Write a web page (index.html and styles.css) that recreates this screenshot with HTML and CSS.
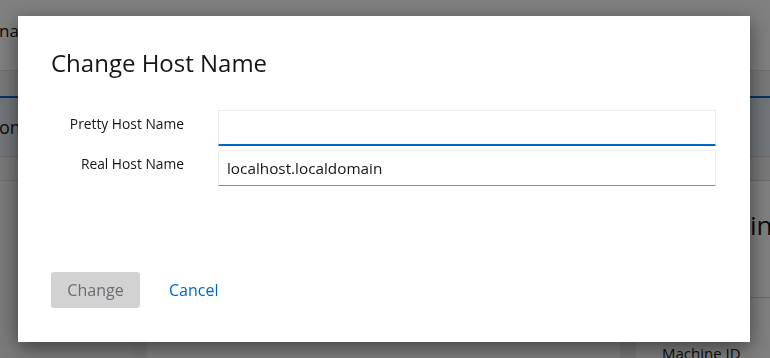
FILE: index.html
```html
<!DOCTYPE html>
<html lang="en">
<head>
<meta charset="utf-8">
<title>Change Host Name</title>
<link rel="stylesheet" href="styles.css">
</head>
<body>
<div class="page">
  <header class="topbar"><span class="top-text">naL</span></header>
  <nav class="tabs"></nav>
  <div class="nav-sel"><span class="sel-text">on</span></div>
  <div class="toolbar"></div>
  <div class="content">
    <div class="col col-left"></div>
    <div class="col col-mid"></div>
    <div class="col col-right">
      <div class="card-title">int</div>
      <div class="card-row"></div>
      <div class="card-row label-row">Machine ID</div>
    </div>
  </div>
</div>
<div class="backdrop">
  <div class="modal" role="dialog" aria-labelledby="modal-title">
    <h1 class="modal-title" id="modal-title">Change Host Name</h1>
    <form class="modal-body">
      <label class="field-label" for="pretty">Pretty Host Name</label>
      <input class="field-input focused" id="pretty" type="text" value="">
      <label class="field-label" for="real">Real Host Name</label>
      <input class="field-input" id="real" type="text" value="localhost.localdomain">
    </form>
    <div class="modal-footer">
      <button class="btn btn-primary" type="button" disabled>Change</button>
      <button class="btn btn-link" type="button">Cancel</button>
    </div>
  </div>
</div>
</body>
</html>
```

FILE: styles.css
```css
* { box-sizing: border-box; }
html, body {
  margin: 0;
  padding: 0;
  width: 770px;
  height: 358px;
  overflow: hidden;
  font-family: "Open Sans", "Noto Sans", sans-serif;
  color: #151515;
}
.page {
  width: 770px;
  height: 358px;
  background: #f0f0f0;
  display: flex;
  flex-direction: column;
  overflow: hidden;
}
.topbar {
  flex-shrink: 0;
  height: 70px;
  background: #ffffff;
  display: flex;
  align-items: center;
  padding-bottom: 10px;
}
.top-text {
  font-size: 17px;
  margin-left: -1px;
}
.tabs {
  flex-shrink: 0;
  height: 28px;
  background: #f0f0f0;
  border-top: 1px solid #e0e0e0;
  border-bottom: 2px solid #0066cc;
}
.nav-sel {
  flex-shrink: 0;
  height: 59px;
  background: #e2eaf2;
  display: flex;
  align-items: center;
  border-bottom: 1px solid #d2d2d2;
}
.sel-text {
  font-size: 18px;
  margin-left: -1px;
}
.toolbar {
  flex-shrink: 0;
  height: 24px;
  background: #f0f0f0;
  border-bottom: 1px solid #d8d8d8;
}
.content {
  flex: 1;
  min-height: 0;
  display: grid;
  grid-template-columns: 131px 473px 1fr;
  column-gap: 16px;
}
.col { background: #ffffff; }
.col-left { background: #f5f5f5; }
.col-right {
  display: flex;
  flex-direction: column;
}
.card-title {
  flex-shrink: 0;
  font-size: 26px;
  padding: 26px 0 0 114px;
  height: 117px;
  border-bottom: 1px solid #d2d2d2;
}
.card-row {
  flex-shrink: 0;
  height: 45px;
}
.label-row {
  font-size: 15px;
  padding-left: 26px;
}

.backdrop {
  position: fixed;
  inset: 0;
  background: rgba(3, 3, 3, 0.5);
  display: flex;
  align-items: flex-start;
  justify-content: flex-start;
  padding: 16px 0 0 18px;
}
.modal {
  width: 732px;
  height: 326px;
  background: #ffffff;
  box-shadow: 0 6px 20px rgba(0, 0, 0, 0.5);
  padding: 32px 34px 34px 33px;
  display: flex;
  flex-direction: column;
}
.modal-title {
  margin: 0;
  font-size: 24px;
  font-weight: 400;
  line-height: 29px;
  color: #151515;
}
.modal-body {
  margin: 33px 0 0;
  display: grid;
  grid-template-columns: 133px 1fr;
  column-gap: 34px;
  row-gap: 4px;
  flex: 1;
  align-content: start;
}
.field-label {
  font-size: 13.8px;
  text-align: right;
  padding-top: 4px;
  line-height: 20px;
  color: #151515;
}
.field-input {
  height: 36px;
  border: 1px solid #ededed;
  border-bottom: 1px solid #8a8d90;
  padding: 0 8px;
  font-family: inherit;
  font-size: 15.3px;
  color: #151515;
  background: #ffffff;
  outline: none;
  margin: 0;
}
.field-input.focused {
  border-bottom: 2px solid #0066cc;
}
.modal-footer {
  display: flex;
  align-items: center;
  gap: 13px;
}
.btn {
  height: 36px;
  font-family: inherit;
  font-size: 16px;
  border: 0;
  border-radius: 3px;
  padding: 0 16px;
  margin: 0;
}
.btn-primary {
  width: 89px;
  padding: 0;
  background: #d2d2d2;
  color: #6a6e73;
}
.btn-link {
  background: transparent;
  color: #0066cc;
}
```
